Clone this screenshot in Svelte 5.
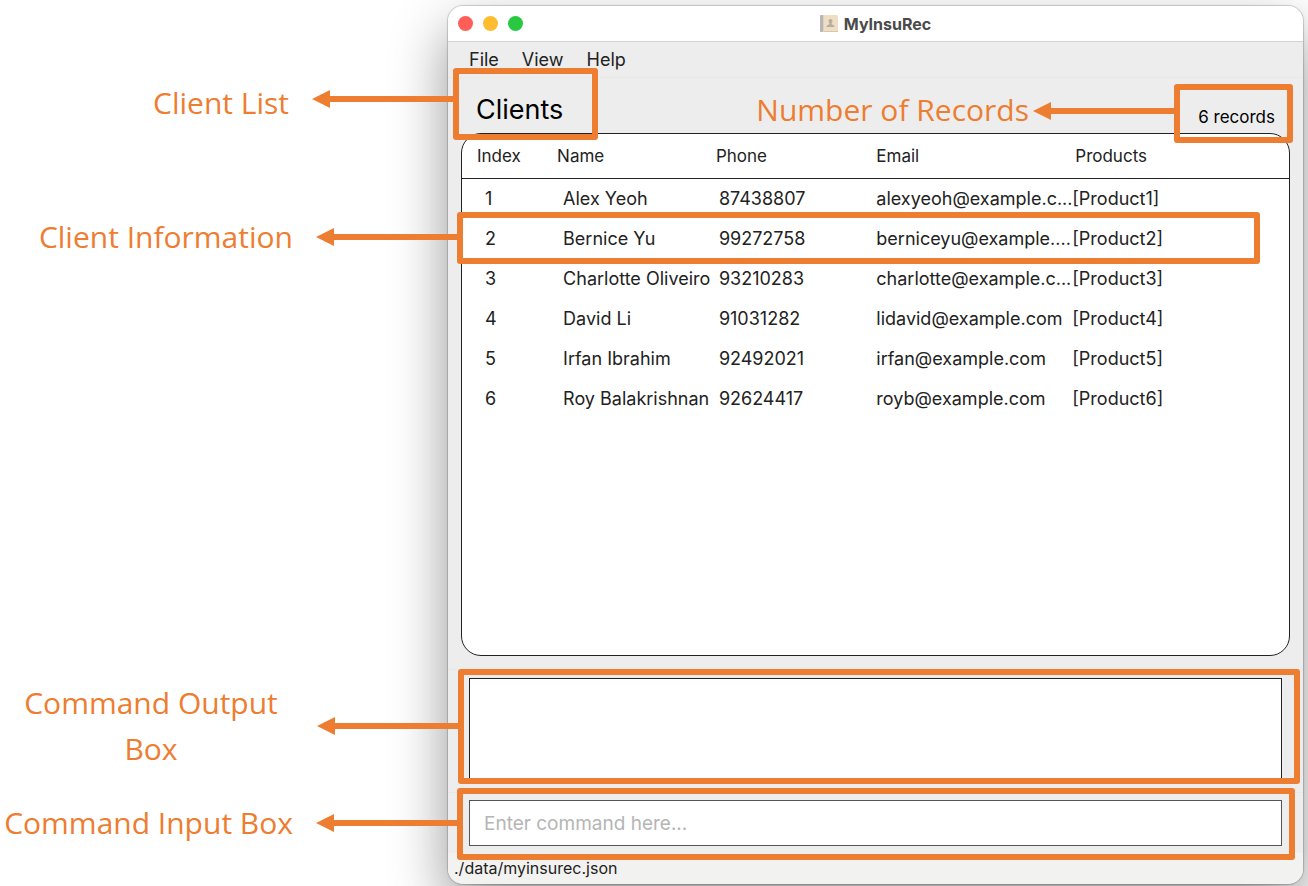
<script>
  const clients = [
    { name: 'Alex Yeoh', phone: '87438807', email: 'alexyeoh@example.c...', product: '[Product1]' },
    { name: 'Bernice Yu', phone: '99272758', email: 'berniceyu@example....', product: '[Product2]' },
    { name: 'Charlotte Oliveiro', phone: '93210283', email: 'charlotte@example.c...', product: '[Product3]' },
    { name: 'David Li', phone: '91031282', email: 'lidavid@example.com', product: '[Product4]' },
    { name: 'Irfan Ibrahim', phone: '92492021', email: 'irfan@example.com', product: '[Product5]' },
    { name: 'Roy Balakrishnan', phone: '92624417', email: 'royb@example.com', product: '[Product6]' }
  ];
  let command = $state('');
</script>

{#snippet callout(kind, label)}
  <div class="frame {kind}">
    <svg class="arrow" viewBox="0 0 141 18" aria-hidden="true">
      <path d="M0 9 18 0V6H141V12H18V18Z" />
    </svg>
    <span class="label">{label}</span>
  </div>
{/snippet}

<div class="page">
  <main class="window">
    <header class="titlebar">
      <div class="lights">
        <button class="red" aria-label="Close"></button>
        <button class="yellow" aria-label="Minimize"></button>
        <button class="green" aria-label="Zoom"></button>
      </div>
      <div class="title">
        <svg viewBox="0 0 18 17" width="18" height="17" aria-hidden="true">
          <rect x="0" y="0" width="18" height="17" rx="1" fill="#eedfc4" />
          <rect x="0" y="0" width="3" height="17" rx="1" fill="#b9b5b5" />
          <rect x="3" y="0" width="1" height="17" fill="#dad2c6" />
          <path d="M4 16H18V17H4Z" fill="#d9c8a8" />
          <path d="M10.500 4C12 4 12.600 5 12.400 6.500C12.200 7.600 11.500 8 11.500 9C12 10 14.500 9.800 14.500 12H6.500C6.500 9.800 9 10 9.500 9C9.500 8 8.800 7.600 8.600 6.500C8.400 5 9 4 10.500 4Z" fill="#b7aea0" />
        </svg>
        <span>MyInsuRec</span>
      </div>
    </header>

    <nav class="menubar">
      <button>File</button>
      <button>View</button>
      <button>Help</button>
    </nav>

    <section class="clients">
      <div class="heading">
        <h1>Clients</h1>
        <span class="count">6 records</span>
        {@render callout('list', 'Client List')}
        {@render callout('records', 'Number of Records')}
      </div>
      <div class="panel">
        <table>
          <thead>
            <tr><th>Index</th><th>Name</th><th>Phone</th><th>Email</th><th>Products</th></tr>
          </thead>
          <tbody>
            {#each clients as client, i}
              <tr>
                <td>
                  {i + 1}
                  {#if i === 1}{@render callout('info', 'Client Information')}{/if}
                </td>
                <td>{client.name}</td>
                <td>{client.phone}</td>
                <td>{client.email}</td>
                <td>{client.product}</td>
              </tr>
            {/each}
          </tbody>
        </table>
      </div>
    </section>

    <section class="output">
      <textarea readonly aria-label="Command output"></textarea>
      {@render callout('result', 'Command Output Box')}
    </section>

    <section class="input">
      <input type="text" aria-label="Command" placeholder="Enter command here..." bind:value={command} />
      {@render callout('entry', 'Command Input Box')}
    </section>

    <footer>./data/myinsurec.json</footer>
  </main>
</div>

<style>
  :global(body) {
    margin: 0;
    background: #fff;
  }
  * {
    box-sizing: border-box;
  }
  .page {
    display: flex;
    min-height: 100vh;
    padding: 6px 5px 2px 448px;
    overflow: hidden;
    font-family: Inter, sans-serif;
    color: #222;
  }
  .window {
    flex: 1;
    min-width: 0;
    display: flex;
    flex-direction: column;
    background: #ededed;
    border-radius: 15px;
    box-shadow: 0 0 1px 1px rgba(0, 0, 0, 0.18), 0 24px 56px rgba(0, 0, 0, 0.42);
  }
  button {
    padding: 0;
    border: 0;
    background: none;
    font: inherit;
    color: inherit;
  }
  .titlebar {
    display: grid;
    grid-template-columns: 1fr auto 1fr;
    align-items: center;
    height: 36px;
    padding: 0 10px;
    background: #fff;
    border-bottom: 1px solid #d2d2d2;
    border-radius: 15px 15px 0 0;
  }
  .lights {
    display: flex;
    gap: 10px;
  }
  .lights button {
    width: 15px;
    height: 15px;
    border-radius: 50%;
  }
  .red {
    background: #ff5f57;
  }
  .yellow {
    background: #febc2e;
  }
  .green {
    background: #28c840;
  }
  .title {
    display: flex;
    align-items: center;
    gap: 6px;
    font-size: 16px;
    font-weight: 700;
    line-height: 20px;
    color: #4a4a4a;
  }
  .menubar {
    display: flex;
    gap: 23px;
    height: 36px;
    padding: 0 21px;
    border-bottom: 1px solid #e8e8e8;
    font-size: 18px;
  }
  .clients {
    flex: 1;
    display: flex;
    flex-direction: column;
    padding: 0 13px 13px;
    border-bottom: 1px solid #e8e8e8;
  }
  .heading {
    position: relative;
    display: flex;
    justify-content: space-between;
    align-items: flex-end;
    height: 55px;
    padding: 0 15px 5px;
    color: #000;
  }
  h1 {
    margin: 0;
    font-size: 27px;
    line-height: 36px;
    font-weight: 400;
  }
  .count {
    font-size: 17px;
    line-height: 22px;
  }
  .panel {
    flex: 1;
    background: #fff;
    border: 1px solid #222;
    border-radius: 20px;
  }
  table {
    width: 100%;
    table-layout: fixed;
    border-collapse: collapse;
    font-size: 18px;
  }
  th,
  td {
    padding: 0;
    text-align: left;
    font-weight: 400;
    white-space: nowrap;
  }
  th {
    height: 44px;
    border-bottom: 1px solid #222;
    font-size: 17px;
  }
  th:nth-child(1) {
    width: 11.5%;
    padding-left: 15px;
  }
  th:nth-child(2) {
    width: 19.2%;
  }
  th:nth-child(3) {
    width: 19.4%;
  }
  th:nth-child(4) {
    width: 23.7%;
  }
  th:nth-child(5) {
    padding-left: 3px;
  }
  td {
    height: 40px;
  }
  td:nth-child(1) {
    padding-left: 23px;
  }
  td:nth-child(2) {
    padding-left: 6px;
  }
  td:nth-child(3) {
    padding-left: 3px;
  }
  tbody tr {
    position: relative;
  }
  .output {
    position: relative;
    padding: 8px 21px;
    border-bottom: 1px solid #e8e8e8;
  }
  textarea {
    display: block;
    width: 100%;
    height: 106px;
    padding: 8px;
    background: #fff;
    border: 1px solid #222;
    outline: 0;
    resize: none;
    font: inherit;
  }
  .input {
    position: relative;
    padding: 7px 21px;
  }
  input {
    display: block;
    width: 100%;
    height: 46px;
    padding: 0 14px;
    background: #fff;
    border: 1px solid #555;
    border-radius: 0;
    outline: 0;
    font: inherit;
    font-size: 19px;
    color: #222;
  }
  input::placeholder {
    color: #b5b5b5;
  }
  footer {
    height: 31px;
    padding: 0 6px;
    background: #f2f2f1;
    border-radius: 0 0 15px 15px;
    font-size: 16px;
    line-height: 31px;
  }

  /* Callouts laid over the window */
  .frame {
    position: absolute;
    z-index: 1;
    border: 6px solid #ed7d31;
    border-radius: 3px;
    pointer-events: none;
  }
  .arrow {
    position: absolute;
    right: 100%;
    top: 50%;
    width: 141px;
    height: 18px;
    margin: -10px 6px 0 0;
    fill: #ed7d31;
  }
  .label {
    position: absolute;
    right: 100%;
    bottom: 50%;
    margin: 0 170px -22px 0;
    font-family: "Open Sans", sans-serif;
    font-size: 30px;
    line-height: 46px;
    text-align: center;
    white-space: nowrap;
    color: #ed7d31;
  }
  .list {
    left: -8px;
    top: -10px;
    width: 145px;
    height: 72px;
  }
  .list .arrow {
    top: 26px;
  }
  .records {
    right: -3px;
    top: 6px;
    width: 119px;
    height: 59px;
  }
  .records .arrow {
    top: 22px;
  }
  .records .label {
    margin: 0 151px -19px 0;
  }
  .info {
    inset: -6px 29px -6px -5px;
  }
  .result {
    inset: -1px 3px 8px 10px;
  }
  .result .label {
    width: 258px;
    margin: 0 184px -45px 0;
    white-space: normal;
  }
  .entry {
    inset: -5px 8px -7px 9px;
  }
</style>
